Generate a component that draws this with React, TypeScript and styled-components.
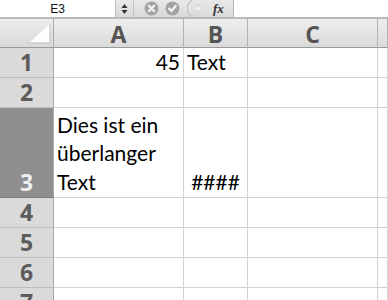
import React from "react";
import styled, { createGlobalStyle } from "styled-components";

const Global = createGlobalStyle`
  html, body { margin: 0; padding: 0; background: #ffffff; }
  body { width: 388px; height: 300px; overflow: hidden; font-family: "Lato", "Liberation Sans", sans-serif; }
`;

const Page = styled.div`
  display: flex;
  flex-direction: column;
  width: 388px;
  height: 300px;
  overflow: hidden;
`;

const TopStrip = styled.div`
  height: 3px;
  background: #c9d1c9;
`;

const FormulaBar = styled.div`
  display: flex;
  height: 17px;
  border-bottom: 2px solid #b9b9b9;
  background: #e2e2e2;
`;

const NameBox = styled.div`
  width: 115px;
  background: #ffffff;
  display: flex;
  align-items: center;
  justify-content: center;
  font-family: "Liberation Sans", Arial, sans-serif;
  font-size: 12px;
  color: #111;
`;

const ToolArea = styled.div`
  width: 117px;
  display: flex;
  align-items: center;
  background: linear-gradient(#e9e9e9, #d9d9d9);
  border-left: 1px solid #c2c2c2;
  border-right: 1px solid #b5b5b5;
`;

const Spin = styled.div`
  width: 17px;
  display: flex;
  justify-content: center;
  border-right: 1px solid #c4c4c4;
  height: 100%;
  align-items: center;
`;

const Icon = styled.div<{ $ml: number }>`
  margin-left: ${(p) => p.$ml}px;
  display: flex;
  align-items: center;
`;

const Fx = styled.span`
  margin-left: 8px;
  font-family: "Liberation Serif", serif;
  font-style: italic;
  font-weight: bold;
  font-size: 13px;
  color: #333;
`;

const Input = styled.div`
  flex: 1;
  background: #ffffff;
`;

const Grid = styled.div`
  display: grid;
  grid-template-columns: 54px 130px 64px 130px 1fr;
  grid-auto-rows: 30px;
  grid-template-rows: 29px 30px 30px 90px 30px 30px 30px 30px;
`;

const Corner = styled.div`
  background: linear-gradient(#ececec, #d9d9d9);
  border-right: 1px solid #a9a9a9;
  border-bottom: 1px solid #9a9a9a;
  display: flex;
  align-items: flex-end;
  justify-content: flex-end;
  padding: 0 2px 3px 0;
  box-sizing: border-box;
`;

const ColHead = styled.div`
  background: linear-gradient(#eeeeee, #dadada);
  border-right: 1px solid #b3b3b3;
  border-bottom: 1px solid #9a9a9a;
  display: flex;
  align-items: center;
  justify-content: center;
  font-family: "Open Sans", "DejaVu Sans", sans-serif;
  font-weight: bold;
  font-size: 23px;
  color: #555555;
  box-sizing: border-box;
  padding-top: 1px;
`;

const RowHead = styled.div<{ $sel?: boolean }>`
  background: ${(p) => (p.$sel ? "#8f8f8f" : "#dadada")};
  border-right: 1px solid #a9a9a9;
  border-bottom: 1px solid ${(p) => (p.$sel ? "#7d7d7d" : "#bcbcbc")};
  display: flex;
  align-items: ${(p) => (p.$sel ? "flex-end" : "center")};
  justify-content: center;
  font-family: "Open Sans", "DejaVu Sans", sans-serif;
  font-weight: bold;
  font-size: 23px;
  color: ${(p) => (p.$sel ? "#eeeeee" : "#5c5c5c")};
  box-sizing: border-box;
  line-height: 29px;
`;

const Cell = styled.div<{ $align?: string }>`
  border-right: 1px solid #d2d2d2;
  border-bottom: 1px solid #d2d2d2;
  box-sizing: border-box;
  display: flex;
  align-items: flex-end;
  justify-content: ${(p) => p.$align || "flex-start"};
  padding: 0 3px 0 3px;
  font-family: "Lato", "Liberation Sans", sans-serif;
  font-size: 21px;
  color: #000;
  line-height: 28.5px;
  overflow: hidden;
`;

const Wrap = styled.div`
  padding-bottom: 1px;
`;

function CornerTri() {
  return (
    <svg width="22" height="20" viewBox="0 0 22 20">
      <polygon points="21,0 21,19 0,19" fill="#ffffff" />
      <polyline points="21,0 21,19 0,19" fill="none" stroke="#bdbdbd" strokeWidth="1" />
    </svg>
  );
}

export default function App() {
  const rows = [1, 2, 3, 4, 5, 6, 7];
  return (
    <Page>
      <Global />
      <TopStrip />
      <FormulaBar>
        <NameBox>E3</NameBox>
        <ToolArea>
          <Spin>
            <svg width="7" height="12" viewBox="0 0 7 12">
              <polygon points="3.5,1 6.5,5 0.5,5" fill="#333" />
              <polygon points="3.5,11 6.5,7 0.5,7" fill="#333" />
            </svg>
          </Spin>
          <Icon $ml={10}>
            <svg width="15" height="15" viewBox="0 0 15 15">
              <circle cx="7.5" cy="7.5" r="7" fill="#a3a3a3" />
              <path d="M4.8 4.8 L10.2 10.2 M10.2 4.8 L4.8 10.2" stroke="#f2f2f2" strokeWidth="2.2" strokeLinecap="round" />
            </svg>
          </Icon>
          <Icon $ml={6}>
            <svg width="15" height="15" viewBox="0 0 15 15">
              <circle cx="7.5" cy="7.5" r="7" fill="#a3a3a3" />
              <path d="M4.2 7.6 L6.6 10 L10.8 4.8" fill="none" stroke="#f2f2f2" strokeWidth="2.2" strokeLinecap="round" strokeLinejoin="round" />
            </svg>
          </Icon>
          <Icon $ml={7}>
            <svg width="18" height="17" viewBox="0 0 18 17">
              <path d="M5 0.5 A9 9 0 0 0 5 16.5" fill="none" stroke="#c4c4c4" strokeWidth="1.5" />
              <circle cx="11" cy="8.5" r="5" fill="#dedede" />
              <ellipse cx="11" cy="8.5" rx="3" ry="1.4" fill="#f4f4f4" />
            </svg>
          </Icon>
          <Fx>fx</Fx>
        </ToolArea>
        <Input />
      </FormulaBar>
      <Grid>
        <Corner>
          <CornerTri />
        </Corner>
        <ColHead>A</ColHead>
        <ColHead>B</ColHead>
        <ColHead>C</ColHead>
        <ColHead />
        {rows.map((r) => (
          <React.Fragment key={r}>
            <RowHead $sel={r === 3}>{r}</RowHead>
            {r === 1 ? (
              <>
                <Cell $align="flex-end"><Wrap>45</Wrap></Cell>
                <Cell><Wrap>Text</Wrap></Cell>
              </>
            ) : r === 3 ? (
              <>
                <Cell>
                  <Wrap>
                    Dies ist ein
                    <br />
                    überlanger
                    <br />
                    Text
                  </Wrap>
                </Cell>
                <Cell $align="center"><Wrap>####</Wrap></Cell>
              </>
            ) : (
              <>
                <Cell />
                <Cell />
              </>
            )}
            <Cell />
            <Cell />
          </React.Fragment>
        ))}
      </Grid>
    </Page>
  );
}
